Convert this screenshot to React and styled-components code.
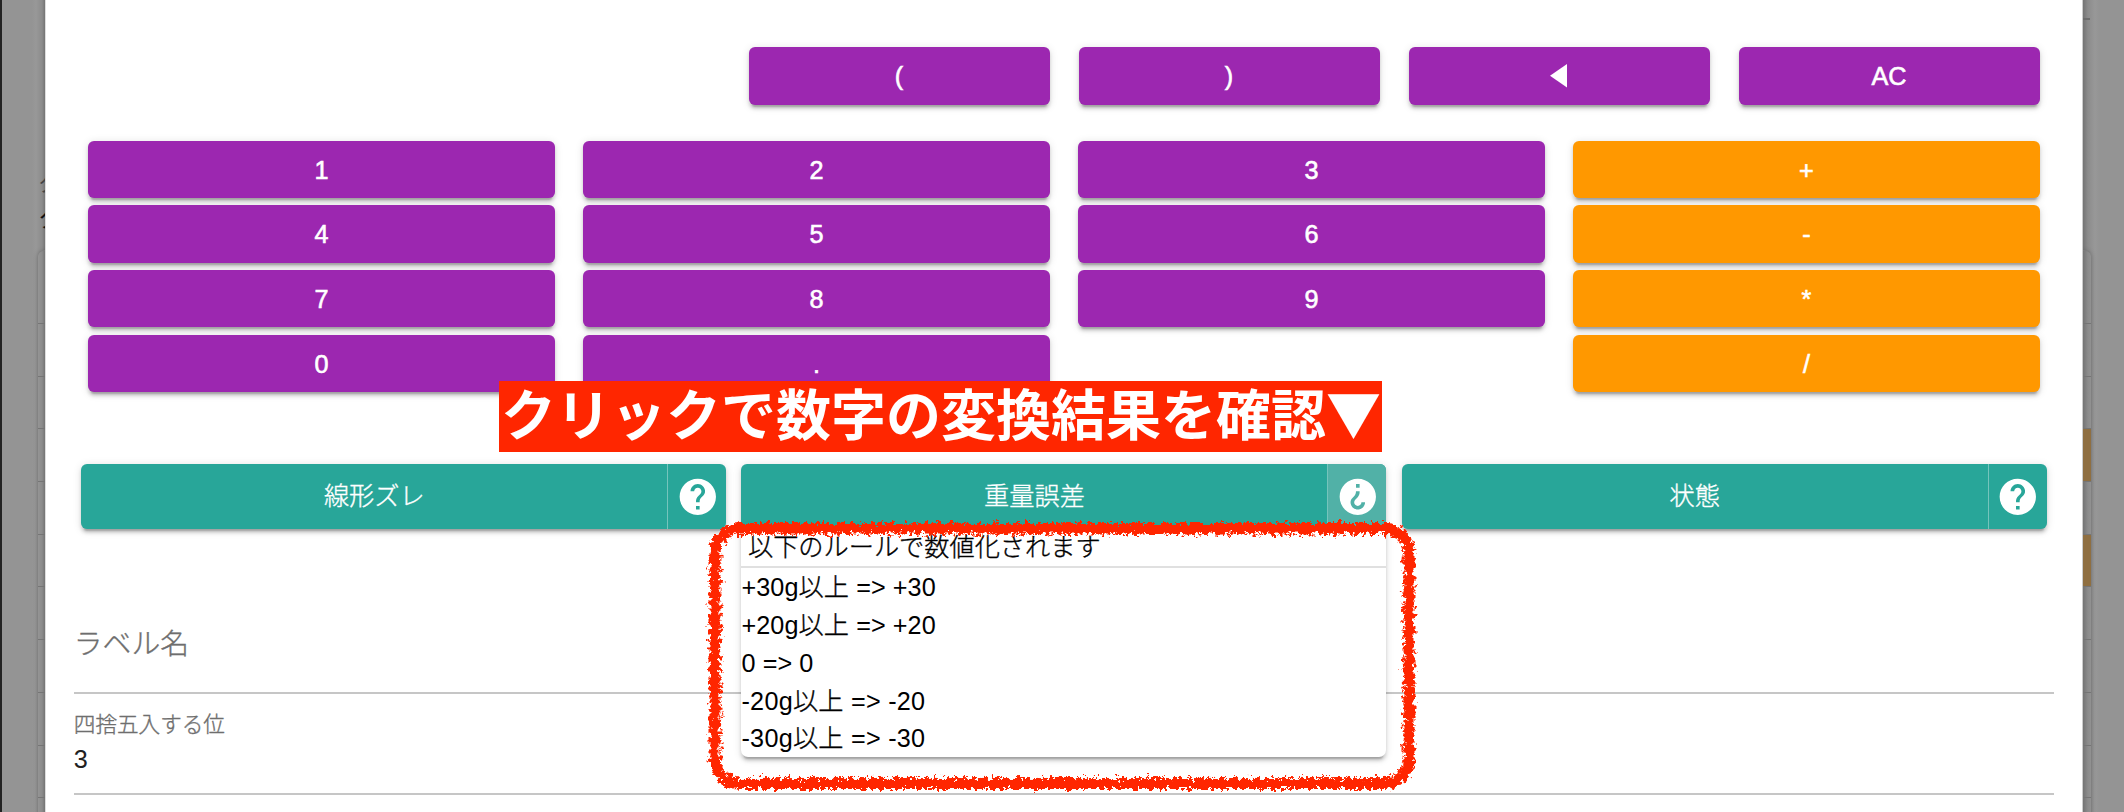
import React from "react";
import styled, { createGlobalStyle, css } from "styled-components";

const GlobalStyle = createGlobalStyle`
  *, *::before, *::after { box-sizing: border-box; }
  body {
    margin: 0;
    background: #949494;
    overflow: hidden;
    font-family: "Liberation Sans", "Noto Sans CJK JP", sans-serif;
    color: #000;
  }
  button {
    font: inherit;
    border: 0;
    margin: 0;
    padding: 0;
    color: #fff;
  }
`;

const raised = css`
  box-shadow: 0 5.4px 1.8px -3.6px rgba(0, 0, 0, 0.2),
    0 3.6px 3.6px 0 rgba(0, 0, 0, 0.14), 0 1.8px 9px 0 rgba(0, 0, 0, 0.12);
`;

const thinText = css`
  font-weight: 300;
  -webkit-text-stroke: 0.35px currentColor;
`;

const Screen = styled.div`
  position: relative;
  display: grid;
  grid-template-columns: 45px 2038px 41px;
  width: 2124px;
  height: 812px;
  overflow: hidden;
`;

const Gutter = styled.div`
  overflow: hidden;
  display: flex;
  flex-direction: column;
  background: linear-gradient(
    to right,
    ${(p) =>
      p.$side === "left"
        ? "#949494 0, #949494 30px, #989898 34px, #8c8c8c 40px, #747474 100%"
        : "#747474 0, #8c8c8c 5px, #989898 12px, #949494 16px, #949494 100%"}
  );
  ${(p) => (p.$side === "left" ? "border-left: 2px solid #222;" : "")}
`;

const GutterHead = styled.div`
  height: 249.5px;
  flex: none;
  display: flex;
  flex-direction: column;
  align-items: flex-start;
  padding: ${(p) => (p.$side === "left" ? "167px 0 0 36px" : "18px 0 0")};
`;

const CutLabel = styled.span`
  font-size: ${(p) => p.$size}px;
  line-height: 34px;
  white-space: nowrap;
  color: ${(p) => p.$color};
`;

const HeadRule = styled.span`
  width: 7px;
  height: 2px;
  background: #6c6c6c;
`;

const RowStack = styled.div`
  width: 7.5px;
  flex: none;
  margin-left: ${(p) => (p.$side === "left" ? "36px" : "0")};
  border-top: 1px solid #7c7c7c;
  border-radius: ${(p) => (p.$side === "left" ? "6px 0 0 0" : "0 6px 0 0")};
  box-shadow: 0 1px 5px rgba(0, 0, 0, 0.28);
`;

const RowCell = styled.div`
  height: ${(p) => (p.$first ? 73.5 : 52.7)}px;
  border-bottom: 1.5px solid #757575;
  background: ${(p) => (p.$marked ? "#8f6f41" : "transparent")};
`;

const Dialog = styled.main`
  position: relative;
  background: #fff;
  border-left: 1px solid #ddd;
  border-right: 1px solid #ccc;
  padding: 47px 28px 0 27.8px;
`;

const MemoryRow = styled.div`
  display: grid;
  grid-template-columns: repeat(4, 301px);
  column-gap: 29px;
  justify-content: end;
  padding-right: 14.5px;
`;

const KeyGrid = styled.div`
  display: grid;
  grid-template-columns: repeat(4, 466.3px);
  column-gap: 28.7px;
  row-gap: 7.2px;
  padding-left: 14.5px;
  margin-top: 36px;
`;

const Key = styled.button`
  ${raised}
  height: 57.5px;
  border-radius: 6px;
  font-size: 25.2px;
  line-height: 44px;
  padding-top: 1px;
  display: flex;
  align-items: center;
  justify-content: center;
  -webkit-text-stroke: 0.6px #fff;
  background: ${(p) => (p.$tone === "operator" ? "#ff9800" : "#9c27b0")};
  ${(p) => (p.$column ? `grid-column: ${p.$column};` : "")}

  svg {
    margin-right: 1px;
  }
`;

const TagRow = styled.div`
  display: grid;
  grid-template-columns: repeat(3, 645px);
  column-gap: 15.2px;
  padding-left: 7.5px;
  margin-top: 71.9px;
`;

const TagCell = styled.div`
  position: relative;
`;

const TagButton = styled.div`
  ${raised}
  display: flex;
  height: 65px;
  border-radius: 6px;
  overflow: hidden;
  background: #28a699;
`;

const TagName = styled.button`
  ${thinText}
  flex: 1;
  background: transparent;
  font-size: 25.2px;
  line-height: 1;
`;

const TagHelp = styled.button`
  width: 59px;
  display: flex;
  align-items: center;
  justify-content: center;
  border-left: 1.5px solid #75c4bc;
  background: ${(p) => (p.$open ? "#51b1a7" : "transparent")};

  svg {
    width: 43.6px;
    height: 43.6px;
    fill: #fff;
    transform: rotate(${(p) => (p.$open ? 180 : 0)}deg);
  }
`;

const RulePanel = styled.section`
  ${raised}
  position: absolute;
  z-index: 2;
  top: 64.5px;
  left: 0;
  width: 645px;
  height: 229px;
  background: #fff;
  border-radius: 0 0 7px 7px;
  font-size: 25.2px;
`;

const RuleTitle = styled.div`
  ${thinText}
  height: 40px;
  padding-left: 6.5px;
  line-height: 38px;
  border-bottom: 2px solid #e0e0e0;
`;

const RuleLine = styled.div`
  height: 37.7px;
  line-height: 39px;
  letter-spacing: ${(p) => (p.$negative ? 0.25 : 0.08)}px;
`;

const Kanji = styled.span`
  ${thinText}
`;

const Fields = styled.div`
  display: flex;
  flex-direction: column;
`;

const Field = styled.label`
  display: flex;
  flex-direction: column;
  height: ${(p) => p.$height}px;
  padding-top: ${(p) => p.$top}px;
  border-bottom: 2px solid #c6c6c6;
  color: #6e6e6e;
`;

const Placeholder = styled.span`
  ${thinText}
  font-size: 28.8px;
  line-height: 36px;
`;

const FieldLabel = styled.span`
  ${thinText}
  font-size: 21.6px;
  line-height: 28px;
`;

const FieldValue = styled.span`
  font-size: 25.2px;
  line-height: 30px;
  margin-top: 4.5px;
  color: #212121;
`;

const Callout = styled.div`
  position: absolute;
  z-index: 4;
  left: 499px;
  top: 381px;
  width: 883px;
  height: 71px;
  background: #ff2600;
  color: #fff;
  font-family: "Noto Sans CJK JP", sans-serif;
  font-weight: 700;
  font-size: 55px;
  line-height: 60px;
  text-indent: 1px;
  white-space: nowrap;
  text-align: center;
`;

const BrushFrame = styled.svg`
  position: absolute;
  z-index: 3;
  left: 700px;
  top: 514px;
  width: 724px;
  height: 286px;
`;

const HelpIcon = () => (
  <svg viewBox="0 0 24 24" aria-hidden="true">
    <path d="M12 2C6.48 2 2 6.48 2 12s4.48 10 10 10 10-4.48 10-10S17.52 2 12 2zm1 17h-2v-2h2v2zm2.07-7.75l-.9.92C13.45 12.9 13 13.5 13 15h-2v-.5c0-1.1.45-2.1 1.17-2.83l1.24-1.26c.37-.36.59-.86.59-1.41 0-1.1-.9-2-2-2s-2 .9-2 2H8c0-2.21 1.79-4 4-4s4 1.79 4 4c0 .88-.36 1.68-.93 2.25z" />
  </svg>
);

const BackIcon = () => (
  <svg width="17" height="24" viewBox="0 0 17 24" aria-hidden="true">
    <path d="M17 0v23.5L0 11.7z" fill="#fff" />
  </svg>
);

const keys = [
  "1", "2", "3", "+",
  "4", "5", "6", "-",
  "7", "8", "9", "*",
  "0", ".", "/",
];
const operators = ["+", "-", "*", "/"];

const rules = [
  { from: "+30g", suffix: "以上", to: "+30" },
  { from: "+20g", suffix: "以上", to: "+20" },
  { from: "0", suffix: "", to: "0" },
  { from: "-20g", suffix: "以上", to: "-20" },
  { from: "-30g", suffix: "以上", to: "-30" },
];

const tags = [
  { name: "線形ズレ" },
  { name: "重量誤差", rules },
  { name: "状態" },
];

const rowIndexes = [0, 1, 2, 3, 4, 5, 6, 7, 8, 9, 10];

const PageRows = ({ side, marked = [] }) => (
  <RowStack $side={side}>
    {rowIndexes.map((i) => (
      <RowCell key={i} $first={i === 0} $marked={marked.includes(i)} />
    ))}
  </RowStack>
);

export default function App() {
  return (
    <>
      <GlobalStyle />
      <Screen>
        <Gutter $side="left">
          <GutterHead $side="left">
            <CutLabel $size={22} $color="#444">タ</CutLabel>
            <CutLabel $size={25} $color="#111">タ</CutLabel>
          </GutterHead>
          <PageRows side="left" />
        </Gutter>
        <Dialog>
          <MemoryRow>
            <Key>(</Key>
            <Key>)</Key>
            <Key aria-label="back"><BackIcon /></Key>
            <Key>AC</Key>
          </MemoryRow>
          <KeyGrid>
            {keys.map((k) => (
              <Key
                key={k}
                $tone={operators.includes(k) ? "operator" : "digit"}
                $column={k === "/" ? 4 : undefined}
              >
                {k}
              </Key>
            ))}
          </KeyGrid>
          <TagRow>
            {tags.map((tag) => (
              <TagCell key={tag.name}>
                <TagButton>
                  <TagName>{tag.name}</TagName>
                  <TagHelp $open={Boolean(tag.rules)}>
                    <HelpIcon />
                  </TagHelp>
                </TagButton>
                {tag.rules && (
                  <RulePanel>
                    <RuleTitle>以下のルールで数値化されます</RuleTitle>
                    {tag.rules.map((r) => (
                      <RuleLine key={r.from} $negative={r.from.startsWith("-")}>
                        {r.from}
                        <Kanji>{r.suffix}</Kanji>
                        {" => "}
                        {r.to}
                      </RuleLine>
                    ))}
                  </RulePanel>
                )}
              </TagCell>
            ))}
          </TagRow>
          <Fields>
            <Field $height={165.5} $top={97}>
              <Placeholder>ラベル名</Placeholder>
            </Field>
            <Field $height={101} $top={17}>
              <FieldLabel>四捨五入する位</FieldLabel>
              <FieldValue>3</FieldValue>
            </Field>
          </Fields>
        </Dialog>
        <Gutter $side="right">
          <GutterHead $side="right">
            <HeadRule />
          </GutterHead>
          <PageRows side="right" marked={[3, 5]} />
        </Gutter>
        <BrushFrame viewBox="0 0 724 286" aria-hidden="true">
          <defs>
            <filter
              id="crayon"
              x="0"
              y="0"
              width="724"
              height="286"
              filterUnits="userSpaceOnUse"
              colorInterpolationFilters="sRGB"
            >
              <feTurbulence type="fractalNoise" baseFrequency="0.24" numOctaves="3" seed="7" result="noise" />
              <feDisplacementMap in="SourceGraphic" in2="noise" scale="12" xChannelSelector="R" yChannelSelector="G" />
            </filter>
          </defs>
          <g filter="url(#crayon)" fill="none" stroke="#ff2600">
            <rect x="14.5" y="14" width="695" height="256" rx="25" strokeWidth="10" />
            <rect x="19.5" y="19" width="685" height="246" rx="20" strokeWidth="4" strokeDasharray="3 2 4 3 2 3" />
          </g>
        </BrushFrame>
        <Callout>クリックで数字の変換結果を確認▼</Callout>
      </Screen>
    </>
  );
}
